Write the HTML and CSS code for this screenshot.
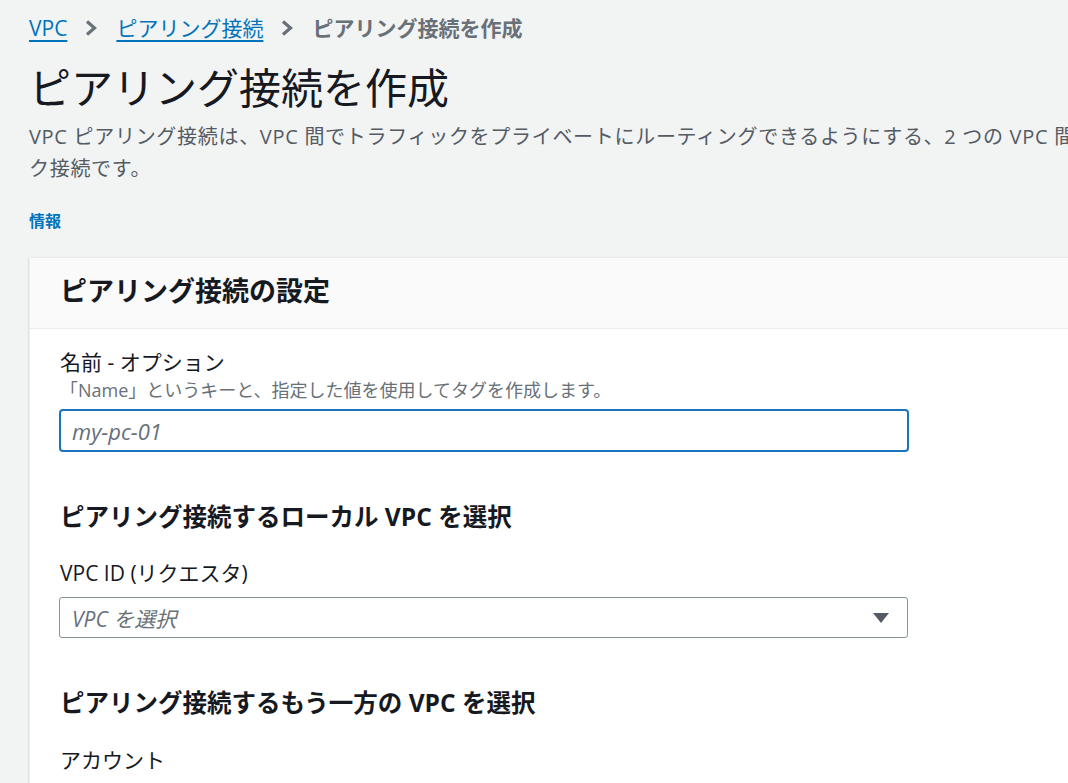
FILE: index.html
```html
<!DOCTYPE html>
<html lang="ja">
<head>
<meta charset="utf-8">
<title>ピアリング接続を作成</title>
<link rel="stylesheet" href="styles.css">
</head>
<body>
<div class="page">
  <nav class="breadcrumbs">
    <a class="crumb-link" href="#">VPC</a>
    <svg class="crumb-sep" viewBox="0 0 14 16" width="14" height="16" aria-hidden="true"><polyline points="3,1.5 10.5,8 3,14.5" fill="none" stroke="currentColor" stroke-width="3.2" stroke-linejoin="miter"/></svg>
    <a class="crumb-link" href="#">ピアリング接続</a>
    <svg class="crumb-sep" viewBox="0 0 14 16" width="14" height="16" aria-hidden="true"><polyline points="3,1.5 10.5,8 3,14.5" fill="none" stroke="currentColor" stroke-width="3.2" stroke-linejoin="miter"/></svg>
    <span class="crumb-current">ピアリング接続を作成</span>
  </nav>

  <h1 class="page-title">ピアリング接続を作成</h1>
  <p class="page-desc">VPC ピアリング接続は、VPC 間でトラフィックをプライベートにルーティングできるようにする、2 つの VPC 間のネットワーク接続です。</p>
  <a class="info-link" href="#">情報</a>

  <section class="card">
    <header class="card-header">
      <h2 class="card-title">ピアリング接続の設定</h2>
    </header>
    <div class="card-body">
      <div class="field">
        <label class="field-label" for="pc-name">名前 - オプション</label>
        <div class="field-desc">「Name」というキーと、指定した値を使用してタグを作成します。</div>
        <input id="pc-name" class="text-input" type="text" placeholder="my-pc-01">
      </div>

      <h3 class="section-title">ピアリング接続するローカル VPC を選択</h3>
      <div class="field">
        <div class="field-label field-label--select">VPC ID (リクエスタ)</div>
        <div class="select">
          <span class="select-placeholder">VPC を選択</span>
          <svg class="select-caret" viewBox="0 0 16 12" width="16" height="12" aria-hidden="true"><polygon points="0,1 16,1 8,11" fill="currentColor"/></svg>
        </div>
      </div>

      <h3 class="section-title">ピアリング接続するもう一方の VPC を選択</h3>
      <div class="field">
        <div class="field-label field-label--account">アカウント</div>
      </div>
    </div>
  </section>
</div>
</body>
</html>
```

FILE: styles.css
```css
html, body {
  margin: 0;
  padding: 0;
  overflow: hidden;
}

body {
  background: #f2f3f3;
  color: #16191f;
  font-family: "Open Sans", "Noto Sans CJK JP", sans-serif;
}

.page {
  width: 1176px;
  padding: 16px 0 0 29px;
}

/* breadcrumb trail */
.breadcrumbs {
  display: flex;
  align-items: center;
  font-size: 21px;
  line-height: 24px;
}

.crumb-link {
  color: #0073bb;
  text-decoration: underline;
  text-decoration-thickness: 2px;
  text-underline-offset: 4px;
}

.crumb-sep {
  color: #687078;
  margin: 0 18px 0 17px;
  flex: none;
}

.crumb-current {
  color: #687078;
  font-weight: 700;
}

/* page heading */
.page-title {
  margin: 22px 0 0;
  font-size: 42px;
  line-height: 52px;
  font-weight: 400;
  color: #16191f;
}

.page-desc {
  margin: 7px 0 0;
  font-size: 20px;
  line-height: 32px;
  letter-spacing: 0.7px;
  color: #545b64;
}

.info-link {
  display: block;
  margin-top: 24px;
  font-size: 16px;
  line-height: 24px;
  font-weight: 700;
  color: #0073bb;
  text-decoration: none;
}

/* container card */
.card {
  margin-top: 24px;
  background: #ffffff;
  border: 1px solid #eaeded;
  border-right: none;
  box-shadow: 0 1px 2px rgba(0, 28, 36, 0.18);
}

.card-header {
  background: #fafafa;
  border-bottom: 1px solid #eaeded;
  padding: 16px 30px 20px;
}

.card-title {
  margin: 0;
  font-size: 27px;
  line-height: 34px;
  font-weight: 700;
  color: #16191f;
}

.card-body {
  padding: 20px 30px 40px;
}

.field-label {
  display: block;
  font-size: 21px;
  line-height: 26px;
  color: #16191f;
}

.field-desc {
  margin-top: 4px;
  font-size: 18px;
  line-height: 22px;
  color: #687078;
}

.text-input {
  display: block;
  box-sizing: border-box;
  margin: 8px 0 0 -1px;
  width: 850px;
  height: 43px;
  padding: 0 11px;
  border: 2px solid #1b73bd;
  border-radius: 4px;
  background: #ffffff;
  font-family: inherit;
  font-size: 22px;
  color: #16191f;
  outline: none;
}

.text-input::placeholder {
  color: #687078;
  font-style: italic;
}

.section-title {
  margin: 49px 0 0;
  font-size: 24.5px;
  line-height: 32px;
  font-weight: 700;
  color: #16191f;
}

.field-label--select {
  margin-top: 27px;
}

.field-label--account {
  margin-top: 28px;
}

.select {
  box-sizing: border-box;
  margin: 11px 0 0 -1px;
  width: 849px;
  height: 41px;
  display: flex;
  align-items: center;
  justify-content: space-between;
  padding: 0 18px 0 12px;
  border: 1px solid #879596;
  border-radius: 3px;
  background: #ffffff;
}

.select-placeholder {
  font-size: 21px;
  font-style: italic;
  color: #687078;
}

.select-caret {
  color: #545b64;
  flex: none;
}
```
